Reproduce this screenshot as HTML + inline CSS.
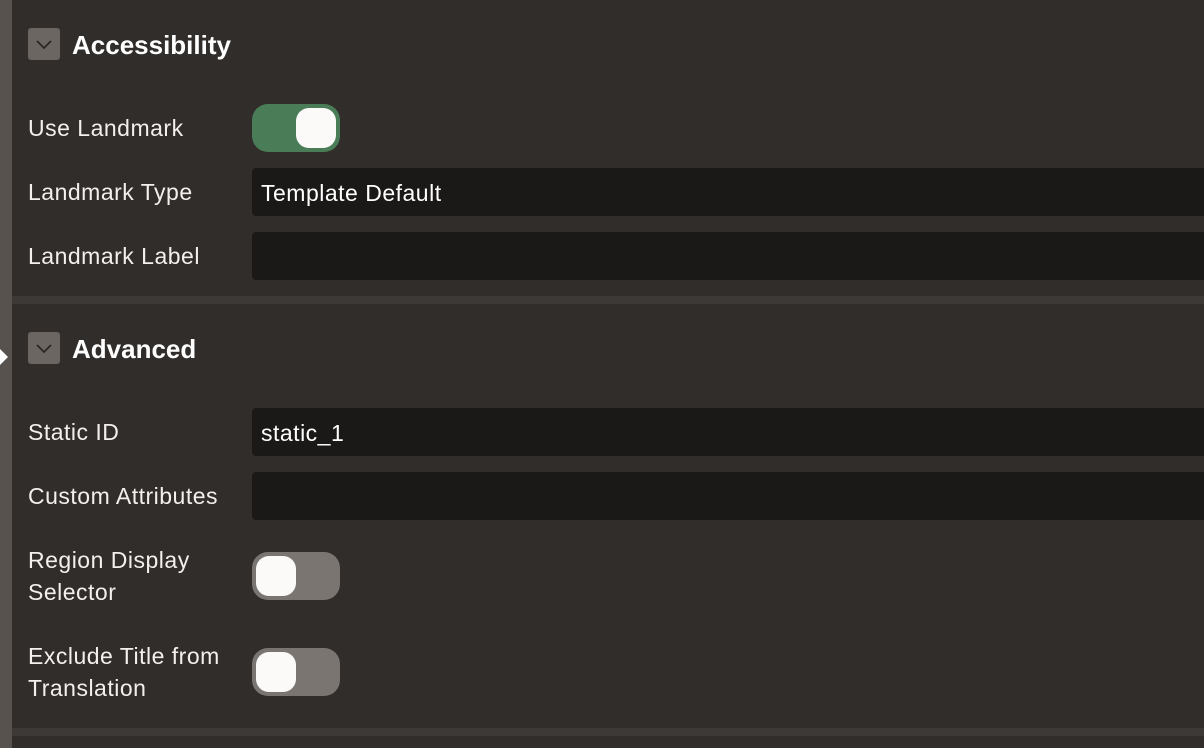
<!DOCTYPE html>
<html><head><style>
body{margin:0;width:1204px;height:748px;overflow:hidden;background:#312d2a;font-family:"Liberation Sans",sans-serif;color:#fff;position:relative}
.strip{position:absolute;left:0;top:0;width:12px;height:748px;background:#57524e}
.bar{position:absolute;left:12px;right:0;height:8px;background:#3d3936}
.chev{position:absolute;left:28px;width:32px;height:32px;background:#6b6662;border-radius:3px}
.chev svg{position:absolute;left:7px;top:9px}
.h{position:absolute;left:72px;font-size:26px;font-weight:bold;line-height:34px}
.l{position:absolute;left:28px;font-size:23px;letter-spacing:0.5px;line-height:32px;color:#f2f0ee}
.in{position:absolute;left:252px;right:0;height:48px;background:#1b1918;border-radius:4px 0 0 4px;font-size:23px;letter-spacing:0.5px;line-height:50px;padding-left:9px;box-sizing:border-box}
.tg{position:absolute;left:252px;width:88px;height:48px;border-radius:16px;background:#7a7571}
.tg.on{background:#4a7c57}
.tg i{position:absolute;top:4px;width:40px;height:40px;border-radius:13px;background:#fbfaf9}
</style></head><body>
<div class="strip"></div>
<svg style="position:absolute;left:0;top:345px" width="10" height="24"><polygon points="0,4 8,12 0,20" fill="#fff"/></svg>
<div class="chev" style="top:28px"><svg width="18" height="14"><polyline points="2,4 9,11 16,4" fill="none" stroke="#2b2826" stroke-width="1.8"/></svg></div>
<div class="h" style="top:28px">Accessibility</div>
<div class="l" style="top:112px">Use Landmark</div>
<div class="tg on" style="top:104px"><i style="left:44px"></i></div>
<div class="l" style="top:176px">Landmark Type</div>
<div class="in" style="top:168px">Template Default</div>
<div class="l" style="top:240px">Landmark Label</div>
<div class="in" style="top:232px"></div>
<div class="bar" style="top:296px"></div>
<div class="chev" style="top:332px"><svg width="18" height="14"><polyline points="2,4 9,11 16,4" fill="none" stroke="#2b2826" stroke-width="1.8"/></svg></div>
<div class="h" style="top:332px">Advanced</div>
<div class="l" style="top:416px">Static ID</div>
<div class="in" style="top:408px">static_1</div>
<div class="l" style="top:480px">Custom Attributes</div>
<div class="in" style="top:472px"></div>
<div class="l" style="top:544px">Region Display<br>Selector</div>
<div class="tg" style="top:552px"><i style="left:4px"></i></div>
<div class="l" style="top:640px">Exclude Title from<br>Translation</div>
<div class="tg" style="top:648px"><i style="left:4px"></i></div>
<div class="bar" style="top:728px"></div>
</body></html>
